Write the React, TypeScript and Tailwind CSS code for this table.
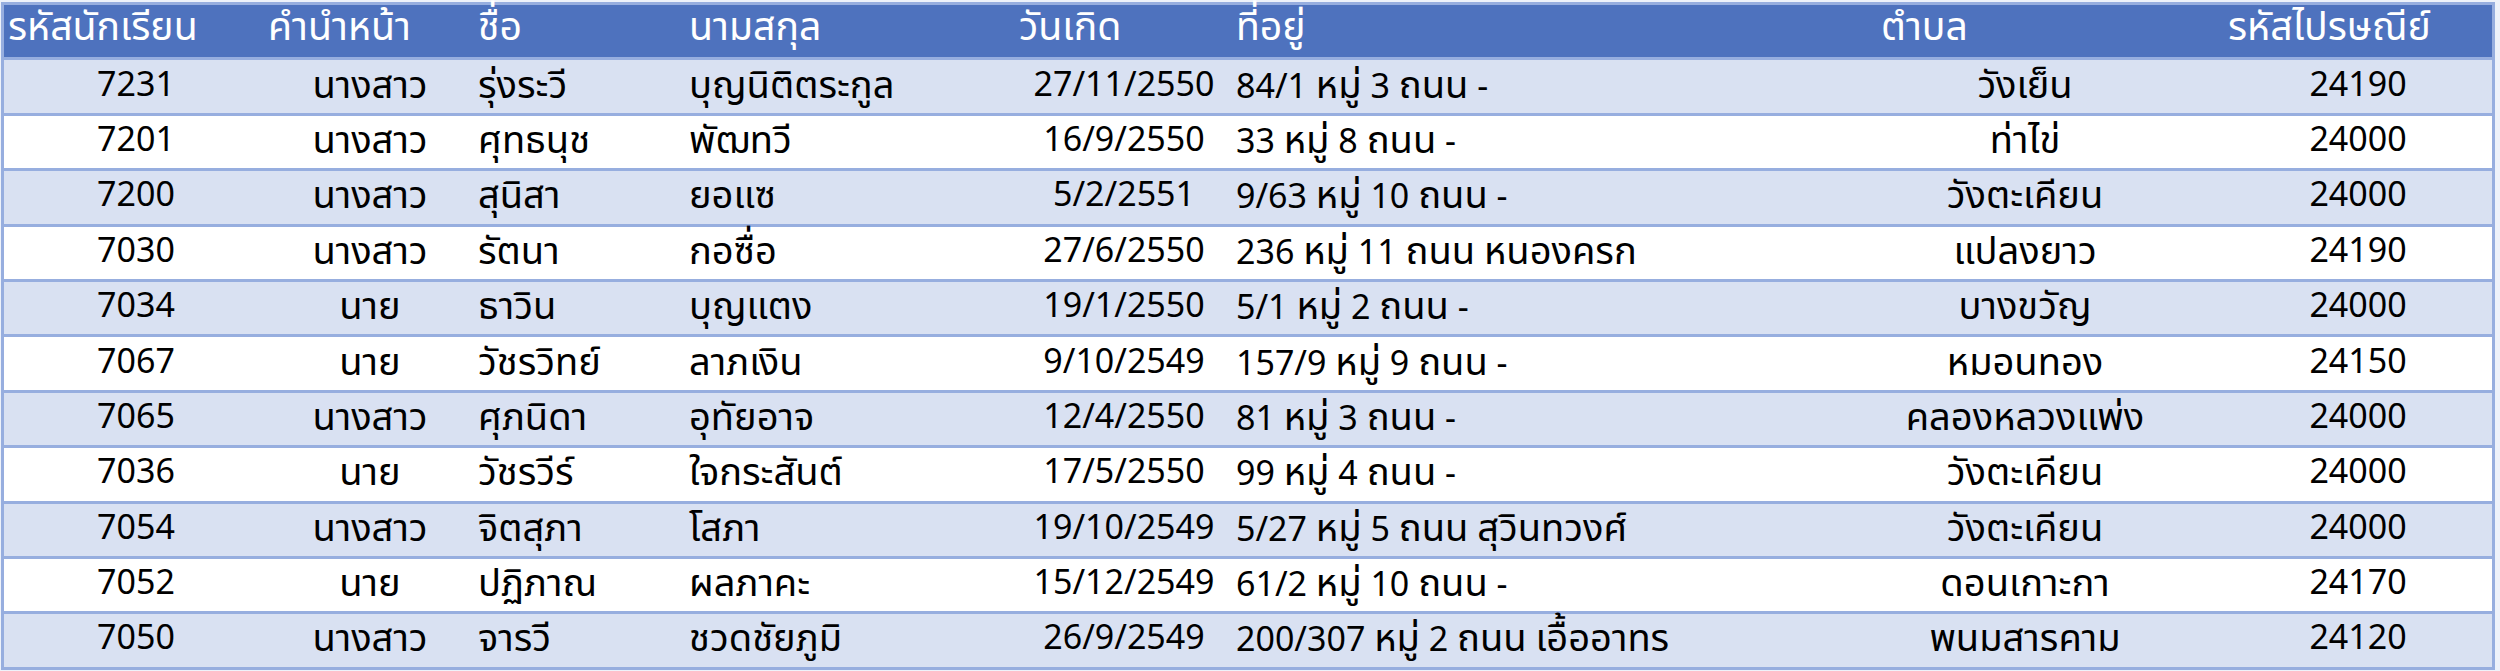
import React from "react"

type Align = "left" | "center"

interface Column {
  title: string
  headPad: string
  align: Align
  cellPad: string
}

const columns: Column[] = [
  { title: "รหัสนักเรียน", headPad: "pl-1", align: "center", cellPad: "" },
  { title: "คำนำหน้า", headPad: "pl-0", align: "center", cellPad: "" },
  { title: "ชื่อ", headPad: "pl-[6px]", align: "left", cellPad: "pl-[6px]" },
  { title: "นามสกุล", headPad: "pl-[1px]", align: "left", cellPad: "pl-[1px]" },
  { title: "วันเกิด", headPad: "pl-[3px]", align: "center", cellPad: "" },
  { title: "ที่อยู่", headPad: "pl-1", align: "left", cellPad: "pl-1" },
  { title: "ตำบล", headPad: "pl-[55px]", align: "center", cellPad: "" },
  { title: "รหัสไปรษณีย์", headPad: "pl-1", align: "center", cellPad: "" },
]

const students: string[][] = [
  ["7231", "นางสาว", "รุ่งระวี", "บุญนิติตระกูล", "27/11/2550", "84/1 หมู่ 3 ถนน -", "วังเย็น", "24190"],
  ["7201", "นางสาว", "ศุทธนุช", "พัฒทวี", "16/9/2550", "33 หมู่ 8 ถนน -", "ท่าไข่", "24000"],
  ["7200", "นางสาว", "สุนิสา", "ยอแซ", "5/2/2551", "9/63 หมู่ 10 ถนน -", "วังตะเคียน", "24000"],
  ["7030", "นางสาว", "รัตนา", "กอซื่อ", "27/6/2550", "236 หมู่ 11 ถนน หนองครก", "แปลงยาว", "24190"],
  ["7034", "นาย", "ธาวิน", "บุญแตง", "19/1/2550", "5/1 หมู่ 2 ถนน -", "บางขวัญ", "24000"],
  ["7067", "นาย", "วัชรวิทย์", "ลาภเงิน", "9/10/2549", "157/9 หมู่ 9 ถนน -", "หมอนทอง", "24150"],
  ["7065", "นางสาว", "ศุภนิดา", "อุทัยอาจ", "12/4/2550", "81 หมู่ 3 ถนน -", "คลองหลวงแพ่ง", "24000"],
  ["7036", "นาย", "วัชรวีร์", "ใจกระสันต์", "17/5/2550", "99 หมู่ 4 ถนน -", "วังตะเคียน", "24000"],
  ["7054", "นางสาว", "จิตสุภา", "โสภา", "19/10/2549", "5/27 หมู่ 5 ถนน สุวินทวงศ์", "วังตะเคียน", "24000"],
  ["7052", "นาย", "ปฏิภาณ", "ผลภาคะ", "15/12/2549", "61/2 หมู่ 10 ถนน -", "ดอนเกาะกา", "24170"],
  ["7050", "นางสาว", "จารวี", "ชวดชัยภูมิ", "26/9/2549", "200/307 หมู่ 2 ถนน เอื้ออาทร", "พนมสารคาม", "24120"],
]

// widths add up to 2488px, the space between the two side borders
const gridCols = "grid grid-cols-[264px_204px_216px_328px_216px_594px_398px_268px]"

// Thai runs are set a little larger than digits, like the sheet's font
const withThai = (text: string) =>
  text.split(/([\u0E00-\u0E7F]+)/).map((part, k) =>
    /[\u0E00-\u0E7F]/.test(part) ? (
      <span key={k} className="text-[1.12em]">
        {part}
      </span>
    ) : (
      part
    )
  )

export default function App() {
  return (
    <div className="min-h-screen w-[2500px] bg-[#eef2fa] pt-[2px] pl-[1px] font-['Noto_Sans','Noto_Sans_Thai',sans-serif] text-black">
      <div className="w-[2494px] border-x-[3px] border-t-[3px] border-[#97aedf]">
        {/* Header row */}
        <div className={`${gridCols} h-[55.4px] border-b-[3px] border-[#97aedf] bg-[#4e72be] text-[35px] text-white`}>
          {columns.map((col) => (
            <div key={col.title} className={`flex items-center pb-[14px] leading-none whitespace-nowrap ${col.headPad}`}>
              <span>{withThai(col.title)}</span>
            </div>
          ))}
        </div>

        {/* Student rows */}
        {students.map((row, i) => (
          <div
            key={row[0]}
            className={`${gridCols} h-[55.4px] border-b-[3px] border-[#97aedf] text-[34px] ${i % 2 === 0 ? "bg-[#d9e1f2]" : "bg-white"}`}
          >
            {row.map((value, j) => (
              <div
                key={j}
                className={`flex items-center pb-2 leading-none whitespace-nowrap ${
                  columns[j].align === "center" ? "justify-center" : "justify-start"
                } ${columns[j].cellPad}`}
              >
                <span>{withThai(value)}</span>
              </div>
            ))}
          </div>
        ))}
      </div>
    </div>
  )
}
